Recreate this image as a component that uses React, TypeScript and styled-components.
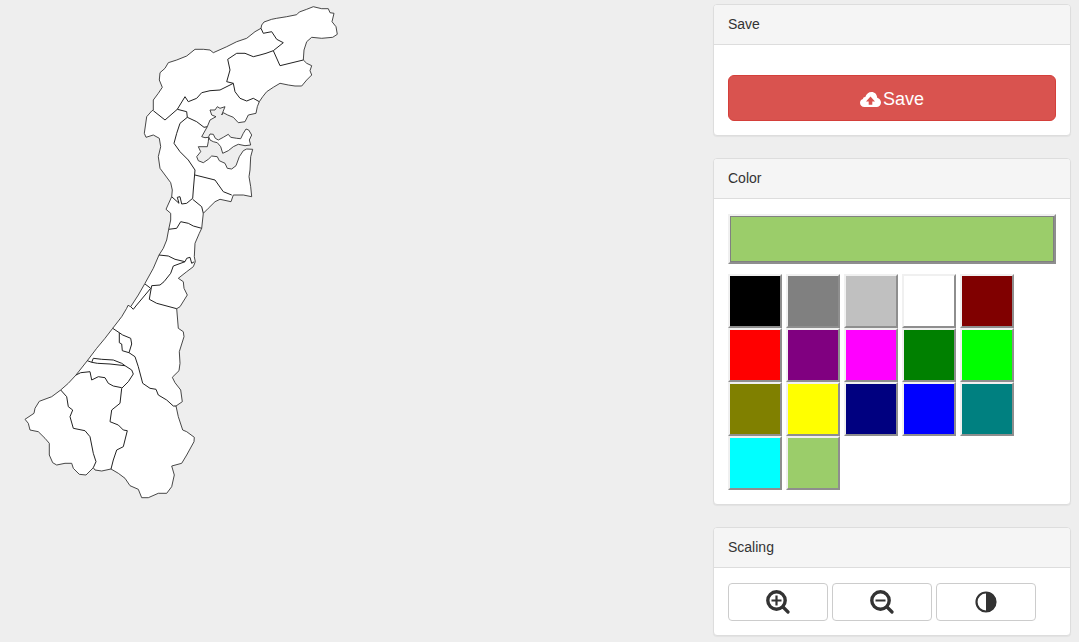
import React from 'react'
import styled, { createGlobalStyle } from 'styled-components'

const GlobalStyle = createGlobalStyle`
    html, body {
        margin: 0;
        padding: 0;
        background: #eee;
        font-family: "Liberation Sans", Arial, sans-serif;
        font-size: 14px;
        line-height: 20px;
        color: #333;
    }
`;

// traced from the two map crops: the upper one is offset (130,0), the lower (10,200), both at 3x
const up = (s: string) => s.trim().split(/\s+/).map(p => {
    const [x, y] = p.split(',').map(Number);
    return `${(130 + x / 3).toFixed(1)},${(y / 3).toFixed(1)}`;
});
const low = (s: string) => s.trim().split(/\s+/).map(p => {
    const [x, y] = p.split(',').map(Number);
    return `${(10 + x / 3).toFixed(1)},${(200 + y / 3).toFixed(1)}`;
});

const outline = [
    ...up(`395,75 402,66 425,58 440,55 470,50 500,44 508,36 530,28 550,20 575,26 595,26 600,38 612,40 606,65 618,80 622,103 608,112
        575,115 545,112 530,125 522,150 520,180 530,190 545,197 540,212 545,225 530,240 515,258 495,258 475,255 450,250 430,262 410,275
        398,290 388,305 382,320 378,340 355,345 345,365 325,368 310,352 293,345 280,338 275,345 285,320 270,325 262,320 255,330 240,330
        245,345 258,350 240,360 232,380 215,410 225,413 236,412 235,425 232,440 205,440 212,455 200,470 205,482 220,488 235,478 245,468
        262,470 268,482 285,490 292,505 305,507 318,497 328,470 340,452 350,447 368,448 362,470 360,510 357,530 362,560 365,590 340,585
        310,585 303,605 270,598 255,605 235,625 220,640`),
    ...low(`575,85 568,100 555,130 553,170 556,185 550,200 530,215 505,235 520,245 522,265 532,285 510,320 500,326 505,385 520,395 522,410
        508,455 510,490 507,512 487,532 495,548 512,570 517,605 498,618 505,650 518,690 530,695 553,712 552,725 530,765 515,790 485,798
        493,825 485,860 470,880 445,880 415,893 395,893 385,868 360,857 345,835 325,820 303,807 275,813 255,810 250,803 228,825 208,823
        190,805 185,790 165,790 140,795 128,788 118,765 118,730 105,715 85,695 60,690 55,670 45,658 72,640 75,625 88,604 125,590 152,570
        175,550 198,525 232,482 260,445 285,415 308,385 335,350 350,325 354,316 362,320 385,285 405,250 430,205 447,165 460,145 470,120 476,88`),
    ...up(`122,660 122,640 108,628 125,590 127,570 122,548 105,525 90,505 85,470 92,440 88,415 70,405 48,412 43,400 50,350 65,333 70,330
        70,300 85,280 97,262 88,240 90,218 105,205 115,188 140,180 170,168 195,148 220,148 240,150 250,158 290,140 320,125 350,115 375,95 393,85`),
];

const island = up(`240,402 250,403 256,415 265,420 280,412 295,403 302,412 320,415 332,416 340,400 348,387 356,390 365,405 358,420 362,435
    345,437 325,433 310,440 295,452 278,460 272,440 262,428 250,425 240,420 236,410`);

const borders = [
    up(`393,85 400,100 425,95 440,118 460,128 430,152 408,160 390,165 370,170 345,160 320,160 293,178 300,210 290,245 310,250 315,275 330,295 350,303 370,295 388,305`),
    up(`430,152 450,197 520,180`),
    up(`70,332 105,360 142,328 165,290 175,305 200,295 215,278 240,272 270,270 300,255 310,250`),
    up(`142,328 170,335 172,352 200,365 222,382 232,380`),
    up(`172,352 150,370 140,400 132,430 150,455 175,480 195,510 190,570 188,595 170,610 155,612 150,590 142,592 147,610 125,590`),
    up(`195,525 255,540 280,575 305,585`),
    up(`188,598 215,620 220,640`),
    low(`476,88 500,85 512,65 535,70 550,78 575,85`),
    low(`447,165 475,168 495,178 525,185 530,175 540,172 545,190 553,185`),
    low(`525,185 490,198 482,220 462,245 450,255 425,257 420,285 418,298 440,310 500,326`),
    low(`405,252 422,265 380,315 370,328 362,320`),
    low(`308,385 328,398 338,405 362,415 365,432 357,458 337,452 335,432 328,428 328,398`),
    low(`357,458 375,470 385,500 398,550 420,565 438,568 445,585 470,600 490,618 498,618`),
    low(`232,482 245,487 262,490 300,492 345,497 365,510 370,522 355,545 335,565 330,610 305,630 300,665 325,675 340,690 352,692 340,740 320,750 310,780 303,807`),
    low(`245,487 250,475 275,478 310,480 335,490 345,497`),
    low(`198,525 212,518 240,515 245,540 265,530 285,533 295,550 310,558 335,563`),
    low(`152,570 170,590 175,620 188,630 180,650 190,685 225,692 240,710 250,760 258,785 250,803`),
];

const COLORS = [
    '#000000', '#808080', '#c0c0c0', '#ffffff', '#800000',
    '#ff0000', '#800080', '#ff00ff', '#008000', '#00ff00',
    '#808000', '#ffff00', '#000080', '#0000ff', '#008080',
    '#00ffff', '#9bcd6a',
];

const CloudUpload = () => (
    <svg width="21" height="15" viewBox="0 0 21 15">
        <path fill="#fff" d="M4.500 15C1.800 15 0 13.200 0 10.800 0 8.800 1.300 7.400 3 7 3 5.800 4 4.800 5.300 5 6.200 2 8.500 0 11.500 0 14.800 0 17 2.400 17.200 5.700 19.400 6.300 21 8.200 21 10.500 21 13.200 19 15 16.500 15Z" />
        <path fill="#d9534f" d="M10.500 4.500 15 9.500H12.300V12.800H8.700V9.500H6Z" />
    </svg>
);

const Magnifier = ({ plus }: { plus?: boolean }) => (
    <svg width="24" height="24" viewBox="0 0 24 24">
        <circle cx="10.500" cy="10.500" r="8.700" fill="none" stroke="#333" strokeWidth="3.400" />
        <path d="M17 17 22 22" stroke="#333" strokeWidth="3.200" strokeLinecap="round" />
        <path d="M5.500 10.500H15.500" stroke="#333" strokeWidth="2.200" />
        {plus && <path d="M10.500 5.500V15.500" stroke="#333" strokeWidth="2.200" />}
    </svg>
);

const Adjust = () => (
    <svg width="22" height="22" viewBox="0 0 22 22">
        <circle cx="11" cy="11" r="9.500" fill="#fff" stroke="#333" strokeWidth="2.200" />
        <path fill="#333" d="M11 1A10 10 0 0 1 11 21Z" />
    </svg>
);

export default function App() {
    return (
        <Page>
            <GlobalStyle />
            <MapPane>
                <svg width="345" height="505" viewBox="0 0 345 505">
                    <Land points={outline.join(' ')} />
                    <Land points={island.join(' ')} />
                    {borders.map((b, i) => <Border key={i} points={b.join(' ')} />)}
                </svg>
            </MapPane>
            <Sidebar>
                <Panel>
                    <PanelHeading>Save</PanelHeading>
                    <SaveBody>
                        <SaveButton type="button"><CloudUpload />Save</SaveButton>
                    </SaveBody>
                </Panel>
                <Panel>
                    <PanelHeading>Color</PanelHeading>
                    <PanelBody>
                        <CurrentColor $color="#9bcd6a" />
                        <Palette>
                            {COLORS.map(c => <Swatch key={c} type="button" $color={c} />)}
                        </Palette>
                    </PanelBody>
                </Panel>
                <Panel>
                    <PanelHeading>Scaling</PanelHeading>
                    <ToolsBody>
                        <ToolButton type="button"><Magnifier plus /></ToolButton>
                        <ToolButton type="button"><Magnifier /></ToolButton>
                        <ToolButton type="button"><Adjust /></ToolButton>
                    </ToolsBody>
                </Panel>
            </Sidebar>
        </Page>
    );
}

const Page = styled.div`
    display: flex;
    justify-content: space-between;
    width: 1079px;
    height: 642px;
    overflow: hidden;
    background: #eee;
`;

const MapPane = styled.div`
    flex: none;

    svg {
        display: block;
    }
`;

const Land = styled.polygon`
    fill: #fff;
    stroke: #333;
    stroke-width: 0.9;
    stroke-linejoin: round;
`;

const Border = styled.polyline`
    fill: none;
    stroke: #222;
    stroke-width: 1;
    stroke-linejoin: round;
`;

const Sidebar = styled.div`
    width: 358px;
    margin: 4px 8px 0 0;
    display: flex;
    flex-flow: column nowrap;
    gap: 22px;
`;

const Panel = styled.section`
    flex: none;
    box-sizing: border-box;
    background: #fff;
    border: 1px solid #ddd;
    border-radius: 4px;
    box-shadow: 0 1px 1px rgba(0, 0, 0, 0.05);
    overflow: hidden;
`;

const PanelHeading = styled.div`
    box-sizing: border-box;
    height: 40px;
    padding: 9px 14px 10px;
    background: #f5f5f5;
    border-bottom: 1px solid #ddd;
`;

const PanelBody = styled.div`
    padding: 15px 14px 14px;
`;

const SaveBody = styled(PanelBody)`
    padding-top: 30px;
`;

const ToolsBody = styled(PanelBody)`
    display: flex;
    gap: 4px;
`;

const SaveButton = styled.button`
    display: flex;
    justify-content: center;
    align-items: center;
    gap: 2px;
    width: 100%;
    height: 46px;
    padding: 2px 0 0;
    background: #d9534f;
    border: 1px solid #d43f3a;
    border-radius: 6px;
    color: #fff;
    font-family: inherit;
    font-size: 18px;
`;

const CurrentColor = styled.div<{ $color: string }>`
    height: 50px;
    box-sizing: border-box;
    background: ${p => p.$color};
    border: 2px solid;
    border-color: #f0f0f0 #8e8e8e #8e8e8e #f0f0f0;
    box-shadow: inset 0 0 0 1px #808080;
`;

const Palette = styled.div`
    display: grid;
    grid-template-columns: repeat(5, 54px);
    grid-auto-rows: 54px;
    column-gap: 4px;
    margin-top: 10px;
`;

const Swatch = styled.button<{ $color: string }>`
    padding: 0;
    box-sizing: border-box;
    background: ${p => p.$color};
    border: 2px solid;
    border-color: #f0f0f0 #8e8e8e #8e8e8e #f0f0f0;
`;

const ToolButton = styled.button`
    display: flex;
    justify-content: center;
    align-items: center;
    width: 100px;
    height: 38px;
    padding: 0;
    background: #fff;
    border: 1px solid #ccc;
    border-radius: 4px;
`;
